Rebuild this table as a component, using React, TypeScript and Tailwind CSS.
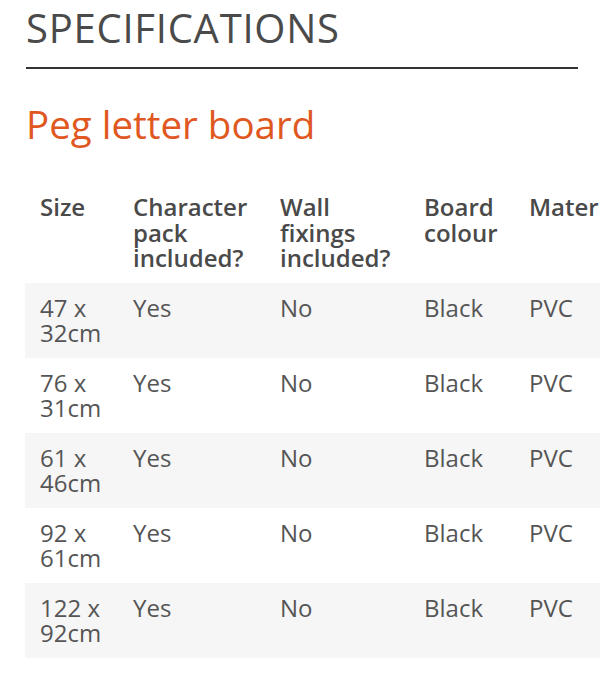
import React from "react";

const rows = [
  ["47 x", "32cm"],
  ["76 x", "31cm"],
  ["61 x", "46cm"],
  ["92 x", "61cm"],
  ["122 x", "92cm"],
];

export default function App() {
  return (
    <div
      className="w-[600px] h-[674px] overflow-hidden bg-white"
      style={{ fontFamily: '"Open Sans", "Liberation Sans", sans-serif' }}
    >
      <div className="pl-[26px] pr-[22px] pt-[4px]">
        <div className="border-b-2 border-[#333333] pb-[15px]">
          <h1 className="text-[40px] leading-[48px] font-normal text-[#4a4a4a] tracking-[0.75px]">
            SPECIFICATIONS
          </h1>
        </div>
        <h2 className="mt-[33px] text-[38.5px] leading-[44px] font-normal text-[#e0581f]">
          Peg letter board
        </h2>
      </div>
      <div className="mt-[36px] pl-[25px] overflow-hidden">
        <table className="table-fixed border-collapse w-[660px] text-[24px] leading-[25.5px]">
          <colgroup>
            <col className="w-[93px]" />
            <col className="w-[147px]" />
            <col className="w-[144px]" />
            <col className="w-[105px]" />
            <col className="w-[171px]" />
          </colgroup>
          <thead>
            <tr className="text-[#4a4a4a] font-semibold text-left align-top">
              <th className="pl-[15px] pr-[4px] py-[12px] font-semibold">Size</th>
              <th className="pl-[15px] pr-[4px] py-[12px] font-semibold">Character pack included?</th>
              <th className="pl-[15px] pr-[4px] py-[12px] font-semibold">Wall fixings included?</th>
              <th className="pl-[15px] pr-[4px] py-[12px] font-semibold">Board colour</th>
              <th className="pl-[15px] pr-[4px] py-[12px] font-semibold whitespace-nowrap">Material</th>
            </tr>
          </thead>
          <tbody>
            {rows.map((r, i) => (
              <tr
                key={i}
                className={
                  "align-top text-[#555555] " + (i % 2 === 0 ? "bg-[#f6f6f6]" : "bg-white")
                }
              >
                <td className="pl-[15px] pr-[4px] py-[12px]">
                  <div className="whitespace-nowrap">{r[0]}</div>
                  <div className="whitespace-nowrap">{r[1]}</div>
                </td>
                <td className="pl-[15px] pr-[4px] py-[12px]">Yes</td>
                <td className="pl-[15px] pr-[4px] py-[12px]">No</td>
                <td className="pl-[15px] pr-[4px] py-[12px]">Black</td>
                <td className="pl-[15px] pr-[4px] py-[12px]">PVC</td>
              </tr>
            ))}
          </tbody>
        </table>
      </div>
    </div>
  );
}
